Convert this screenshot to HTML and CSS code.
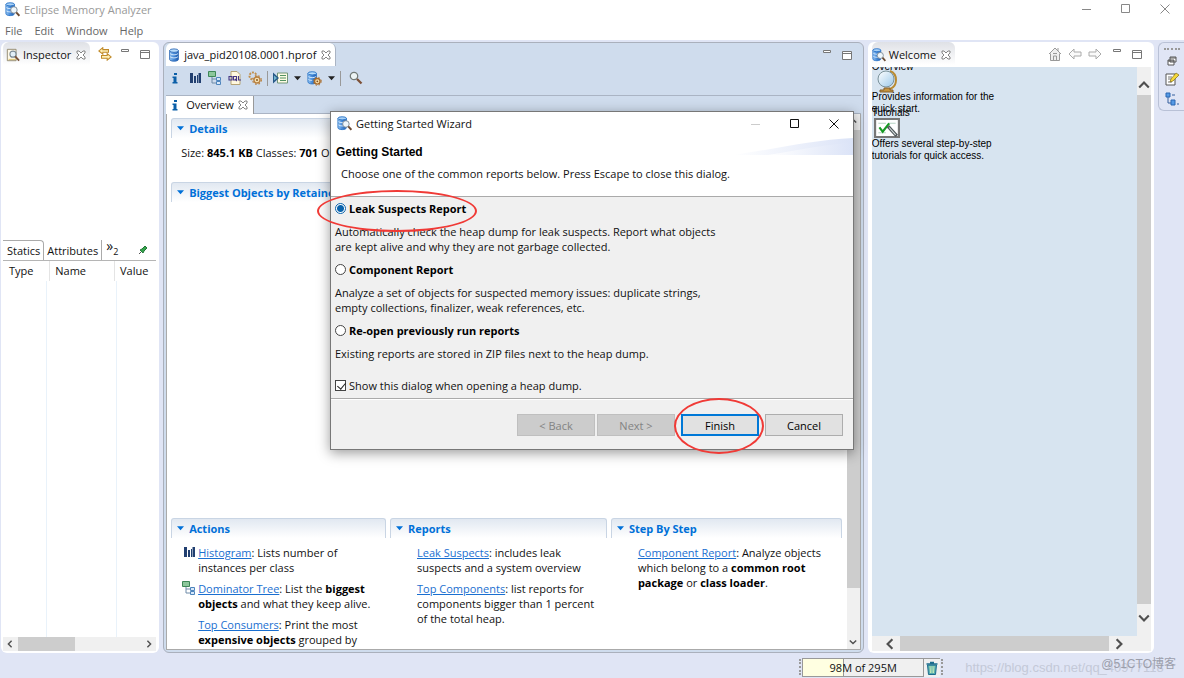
FILE: index.html
```html
<!DOCTYPE html>
<html lang="en">
<head>
<meta charset="utf-8">
<title>Eclipse Memory Analyzer</title>
<link rel="stylesheet" href="styles.css">
</head>
<body>
<svg class="defs" aria-hidden="true">
  <defs>
    <linearGradient id="blue" x1="0" x2="1"><stop offset="0" stop-color="#9cc8f2"/><stop offset=".4" stop-color="#4f92dd"/><stop offset="1" stop-color="#1f5cae"/></linearGradient>
    <linearGradient id="globe" x1="0" y1="0" x2="1" y2="1"><stop offset="0" stop-color="#fff"/><stop offset="1" stop-color="#9cc9ea"/></linearGradient>
    <linearGradient id="swoosh" x1="0" x2="1"><stop offset="0" stop-color="#fff"/><stop offset="1" stop-color="#dbe3f7"/></linearGradient>
    <symbol id="db" viewBox="0 0 16 16"><path d="M3 3v10c0 1.300 2 2 5 2s5-.7 5-2V3z" fill="url(#blue)" stroke="#2b67b5"/><ellipse cx="8" cy="3" rx="5" ry="2" fill="#b9dcfa" stroke="#2b67b5"/><path d="M3.500 6.500c2 1.800 7 1.800 9 0M3.500 10c2 1.800 7 1.800 9 0" fill="none" stroke="#e4f2ff"/></symbol>
    <symbol id="mat" viewBox="0 0 16 16"><path d="M1 2.500v10c0 1.200 2 2 4.500 2s4.500-.8 4.500-2v-10z" fill="url(#blue)" stroke="#2b74c8"/><ellipse cx="5.500" cy="2.500" rx="4.500" ry="1.700" fill="#a9d2f7" stroke="#2b74c8"/><path d="M1.500 6c2 1.500 6 1.500 8 0M1.500 9.500c2 1.500 6 1.500 8 0" fill="none" stroke="#d8ecff"/><circle cx="9.500" cy="8.500" r="3.500" fill="#eef6fb" stroke="#7b8a96"/><path d="M12 11l3.300 3.700" stroke="#6b4a32" stroke-width="2"/></symbol>
    <symbol id="inspect" viewBox="0 0 16 16"><path d="M1.500 1.500h10v13h-10z" fill="#fff9e8" stroke="#8c8468"/><path d="M3 13h8" stroke="#d6b95c"/><circle cx="8" cy="7" r="3.500" fill="#e2eff8" stroke="#7c8c98" stroke-width="1.300"/><path d="M10.500 9.500l4.500 5" stroke="#7a5138" stroke-width="2"/></symbol>
    <symbol id="close" viewBox="0 0 10 10"><path d="M1 1h2l2 2 2-2h2v2L7 5l2 2v2H7L5 7 3 9H1V7l2-2-2-2z" fill="#fff" stroke="#777" stroke-width=".9"/></symbol>
    <symbol id="sync" viewBox="0 0 16 16"><path d="M5.500 .8L1 4.500l4.500 3.700V6H12V3H5.500zM10.500 7.500v2.300H4v3h6.500V15L15 11.300z" fill="#fff0b8" stroke="#c08a28" stroke-width="1.200"/></symbol>
    <symbol id="info" viewBox="0 0 14 14"><path d="M6 2h3v2H6zM4.500 5.500h4V11h1v1.500h-5V11h1V7h-1z" fill="#0b5fa8"/></symbol>
    <symbol id="hist" viewBox="0 0 14 14"><path d="M2 2h3v10H2zM6 5h2v7H6zM9 4h1v8H9zM10.500 2H13v10h-2.500z" fill="#213f70"/></symbol>
    <symbol id="tree" viewBox="0 0 14 14"><path d="M4 6v6h4M4 8h4" fill="none" stroke="#6e8ba8"/><path d="M.5.500h7v5h-7z" fill="#8cc79b" stroke="#3e8758"/><path d="M8.500 6.500h4v3h-4zM8.500 10.500h4v3h-4z" fill="#d7e8fa" stroke="#4e85bd"/></symbol>
    <symbol id="oql" viewBox="0 0 14 14"><path d="M3 .5h6l3 3v10H3z" fill="#fff8df" stroke="#b5a376"/><path d="M1 5.500h3v3.500H1zM5.500 5.500h3v3.500h-3zM10.500 5v4H13M7 8l2 2" fill="none" stroke="#453783" stroke-width="1.100"/></symbol>
    <symbol id="gear" viewBox="0 0 14 14"><circle cx="5" cy="5" r="3.500" fill="none" stroke="#c08f4e" stroke-width="2" stroke-dasharray="2 1"/><circle cx="9" cy="9" r="3" fill="#f4e1b6" stroke="#b9803e" stroke-width="1.300"/><circle cx="9" cy="9" r="4.300" fill="none" stroke="#b9803e" stroke-width="1.300" stroke-dasharray="1.500 2"/><circle cx="9" cy="9" r="1" fill="#8b5a22"/></symbol>
    <symbol id="run" viewBox="0 0 15 14"><path d="M4.500 1.500h10v10h-10z" fill="#fffbe5" stroke="#729679"/><path d="M7 4h6M7 6.500h6M7 9h6" stroke="#529362"/><path d="M0 1l6 5.500L0 12z" fill="#285987"/><path d="M1 4v5l3-2.500z" fill="#71b6cf"/></symbol>
    <symbol id="dbgear" viewBox="0 0 16 16"><path d="M1 2.500v9c0 3 9 3 9 0v-9z" fill="url(#blue)" stroke="#2b74c8"/><ellipse cx="5.500" cy="2.500" rx="4.500" ry="1.700" fill="#b7dcfa" stroke="#2b74c8"/><path d="M1.500 6c2 1.500 6 1.500 8 0M1.500 9c1 1 3 1 4 1" fill="none" stroke="#d8ecff"/><circle cx="11" cy="11" r="3" fill="#f8dfaa" stroke="#a96c2b" stroke-width="1.500"/><circle cx="11" cy="11" r="4.300" fill="none" stroke="#a96c2b" stroke-dasharray="1.500 2"/><circle cx="11" cy="11" r="1" fill="#805025"/></symbol>
    <symbol id="search" viewBox="0 0 14 14"><circle cx="5" cy="5" r="3.700" fill="#edf4f4" stroke="#737b77" stroke-width="1.300"/><path d="M8 8l4.500 4.500" stroke="#7d5137" stroke-width="2.300"/></symbol>
    <symbol id="down" viewBox="0 0 8 5"><path d="M0 0h8L4 4.500z" fill="currentColor"/></symbol>
    <symbol id="min" viewBox="0 0 10 10"><path d="M1.500 3.500h7v2h-7z" fill="#fff" stroke="#777"/></symbol>
    <symbol id="max" viewBox="0 0 10 10"><path d="M.5 1.500h9v8h-9zM.5 3.500h9" fill="#fff" stroke="#777"/></symbol>
    <symbol id="pin" viewBox="0 0 10 10"><path d="M1 9l3-3" stroke="#555"/><path d="M2 5l2-1 3-3 2 2-3 3-1 2z" fill="#36a34b" stroke="#217838"/></symbol>
    <symbol id="home" viewBox="0 0 14 14"><path d="M1 7l6-6 6 6M2.500 6.500v7h9v-7" fill="#eee" stroke="#999"/><path d="M5.500 13V9h3v4M5 6.500h4M10 1v3" fill="none" stroke="#999"/></symbol>
    <symbol id="back" viewBox="0 0 14 12"><path d="M6 1L1 6l5 5V8h7V4H6z" fill="#fafafa" stroke="#aaa"/></symbol>
    <symbol id="restore" viewBox="0 0 10 10"><path d="M3 1h6v5H3zM1 4h6v5H1zM3 2h6M1 5h6" fill="#fff" stroke="#555"/></symbol>
    <symbol id="note" viewBox="0 0 14 14"><path d="M1 2h9v11H1z" fill="#fff" stroke="#555"/><path d="M3 5h4M3 7h3M3 10h4" stroke="#777"/><path d="M5 10l1-3 5-6 3 2-6 6z" fill="#f5d83a" stroke="#806b16" stroke-width=".7"/></symbol>
    <symbol id="outline" viewBox="0 0 14 14"><path d="M3 5v6h3M7 3h3M11 7h0M12 12h2" fill="none" stroke="#345f9d"/><path d="M1 1h4v4H1zM6 8h4v5H6z" fill="#5499e5" stroke="#2a67b2"/></symbol>
    <symbol id="trash" viewBox="0 0 12 14"><path d="M1.500 4h9l-1 9.500h-7z" fill="#55acae" stroke="#1d6d8d"/><path d="M4 5l.5 7M6 5v7M8 5l-.5 7" stroke="#c7edb7"/><path d="M.5 3h11M4 1.500h4" stroke="#1d6d8d" stroke-width="1.500"/></symbol>
    <symbol id="chev" viewBox="0 0 10 10"><path d="M1 3l4 4 4-4" fill="none" stroke="#505050" stroke-width="1.800"/></symbol>
    <symbol id="wmin" viewBox="0 0 10 10"><path d="M0 5.500h9" stroke="currentColor"/></symbol>
    <symbol id="wmax" viewBox="0 0 10 10"><path d="M.5.500h8v8h-8z" fill="none" stroke="currentColor"/></symbol>
    <symbol id="wclose" viewBox="0 0 10 10"><path d="M.5.500l9 9M9.500.500l-9 9" stroke="currentColor"/></symbol>
  </defs>
</svg>
<div class="app">
  <header class="titlebar">
    <svg class="i15"><use href="#mat"/></svg><h1>Eclipse Memory Analyzer</h1>
    <div class="winbtns">
      <button aria-label="Minimize"><svg class="i10"><use href="#wmin"/></svg></button>
      <button aria-label="Maximize"><svg class="i10"><use href="#wmax"/></svg></button>
      <button aria-label="Close"><svg class="i10"><use href="#wclose"/></svg></button>
    </div>
  </header>
  <nav class="menubar"><button>File</button><button>Edit</button><button>Window</button><button>Help</button></nav>

  <main class="workbench">
    <section class="pane inspector">
      <div class="tabrow">
        <div class="tab graytab"><svg class="i14"><use href="#inspect"/></svg><span>Inspector</span><svg class="i10"><use href="#close"/></svg></div>
        <svg class="i14"><use href="#sync"/></svg>
        <svg class="i10 raised"><use href="#min"/></svg>
        <svg class="i10 wide"><use href="#max"/></svg>
      </div>
      <div class="inspect-body"></div>
      <div class="subtabs"><button class="on">Statics</button><button>Attributes</button><span class="more">»<sub>2</sub></span><svg class="i10"><use href="#pin"/></svg></div>
      <table class="props"><thead><tr><th>Type</th><th>Name</th><th>Value</th></tr></thead><tbody><tr><td></td><td></td><td></td></tr></tbody></table>
      <div class="hbar small"><svg class="i8 left"><use href="#chev"/></svg><div class="track"><div class="thumb third"></div></div><svg class="i8 right"><use href="#chev"/></svg></div>
    </section>

    <section class="pane editor">
      <div class="tabrow">
        <div class="tab filetab"><svg class="i14"><use href="#db"/></svg><span>java_pid20108.0001.hprof</span><svg class="i10"><use href="#close"/></svg></div>
        <div class="ends"><svg class="i10 raised"><use href="#min"/></svg><svg class="i10"><use href="#max"/></svg></div>
      </div>
      <div class="toolbar">
        <button aria-label="Overview"><svg class="i14"><use href="#info"/></svg></button>
        <button aria-label="Histogram"><svg class="i14"><use href="#hist"/></svg></button>
        <button aria-label="Dominator tree"><svg class="i14"><use href="#tree"/></svg></button>
        <button aria-label="OQL"><svg class="i14"><use href="#oql"/></svg></button>
        <button aria-label="Threads"><svg class="i14"><use href="#gear"/></svg></button>
        <i class="sep"></i>
        <button aria-label="Run report"><svg class="i15"><use href="#run"/></svg></button>
        <button aria-label="Report list"><svg class="arrow"><use href="#down"/></svg></button>
        <button aria-label="Query browser"><svg class="i15"><use href="#dbgear"/></svg></button>
        <button aria-label="Query list"><svg class="arrow"><use href="#down"/></svg></button>
        <i class="sep"></i>
        <button class="find" aria-label="Search"><svg class="i14"><use href="#search"/></svg></button>
      </div>
      <div class="innertabs"><div class="overtab"><svg class="i14"><use href="#info"/></svg><span>Overview</span><svg class="i10"><use href="#close"/></svg></div></div>
      <div class="editbody">
        <div class="overview">
          <section class="details"><h2><svg class="arrow"><use href="#down"/></svg>Details</h2>
            <p>Size: <b>845.1 KB</b> Classes: <b>701</b> Ob</p></section>
          <section class="biggest"><h2><svg class="arrow"><use href="#down"/></svg>Biggest Objects by Retained Size</h2>
            <p class="total">Total: 845.1 KB</p></section>
          <div class="columns">
            <section><h2><svg class="arrow"><use href="#down"/></svg>Actions</h2>
              <ul class="acts">
                <li><svg class="i14"><use href="#hist"/></svg><p><a href="#">Histogram</a>: Lists number of<br>instances per class</p></li>
                <li><svg class="i14"><use href="#tree"/></svg><p><a href="#">Dominator Tree</a>: List the <b>biggest<br>objects</b> and what they keep alive.</p></li>
                <li><p><a href="#">Top Consumers</a>: Print the most<br><b>expensive objects</b> grouped by</p></li>
              </ul></section>
            <section><h2><svg class="arrow"><use href="#down"/></svg>Reports</h2>
              <ul><li><p><a href="#">Leak Suspects</a>: includes leak<br>suspects and a system overview</p></li>
                <li><p><a href="#">Top Components</a>: list reports for<br>components bigger than 1 percent<br>of the total heap.</p></li></ul></section>
            <section><h2><svg class="arrow"><use href="#down"/></svg>Step By Step</h2>
              <ul><li><p><a href="#">Component Report</a>: Analyze objects<br>which belong to a <b>common root<br>package</b> or <b>class loader</b>.</p></li></ul></section>
          </div>
        </div>
        <div class="vbar thin"><svg class="i8 up"><use href="#chev"/></svg><div class="track"><div class="thumb"></div></div><svg class="i8"><use href="#chev"/></svg></div>
      </div>
    </section>

    <section class="pane welcome">
      <div class="tabrow">
        <div class="tab graytab"><svg class="i14"><use href="#mat"/></svg><span>Welcome</span><svg class="i10"><use href="#close"/></svg></div>
        <div class="ends"><svg class="i14"><use href="#home"/></svg><svg class="i14"><use href="#back"/></svg><svg class="i14 flip"><use href="#back"/></svg><svg class="i10 raised"><use href="#min"/></svg><svg class="i10"><use href="#max"/></svg></div>
      </div>
      <div class="welbody">
        <div class="weltext">
          <h3 class="cut">Overview</h3>
          <svg class="pic globe" viewBox="0 0 24 24"><path d="M15 2c8 3 8 15 0 18" fill="none" stroke="#b98b32" stroke-width="2"/><circle cx="11" cy="10" r="8" fill="url(#globe)" stroke="#7b929b"/><path d="M9 19h6v2h3v2H5v-2h4z" fill="#c4943f" stroke="#85612c"/></svg>
          <p>Provides information for the<br>quick start.</p>
          <h3 class="lap">Tutorials</h3>
          <svg class="pic board" viewBox="0 0 24 19" preserveAspectRatio="none"><path d="M1 1h22v17H1z" fill="#fff" stroke="#777" stroke-width="2"/><path d="M4 5h7M13 5h7M4 14h7" stroke="#b7d3c4"/><path d="M5 9l3 4 6-8" fill="none" stroke="#179a24" stroke-width="2"/><path d="M13 8l8 9" stroke="#4f5759" stroke-width="3"/><path d="M14 9l6 7" stroke="#d8dfdf"/></svg>
          <p>Offers several step-by-step<br>tutorials for quick access.</p>
        </div>
        <div class="vbar"><svg class="i12 up"><use href="#chev"/></svg><div class="track"><div class="thumb"></div></div><svg class="i12"><use href="#chev"/></svg></div>
        <div class="hbar"><svg class="i12 left"><use href="#chev"/></svg><div class="track"><div class="thumb"></div></div><svg class="i12 right"><use href="#chev"/></svg></div>
      </div>
    </section>

    <aside class="trim"><i class="grip"></i><svg class="i10"><use href="#restore"/></svg><svg class="i14"><use href="#note"/></svg><svg class="i14"><use href="#outline"/></svg></aside>
  </main>

  <footer class="status">
    <i class="vgrip"></i><div class="heap">98M of 295M</div><button class="gc" aria-label="Run garbage collector"><svg class="i14"><use href="#trash"/></svg></button><i class="vgrip"></i>
    <span class="mark">https://blog.csdn.net/qq_40977118</span><span class="mark site">@51CTO博客</span>
  </footer>
</div>

<form class="dialog" role="dialog" aria-labelledby="dlgtitle">
  <div class="dlgbar"><svg class="i15"><use href="#mat"/></svg><span id="dlgtitle">Getting Started Wizard</span>
    <div class="winbtns"><button type="button" class="off" aria-label="Minimize dialog"><svg class="i10"><use href="#wmin"/></svg></button><button type="button" aria-label="Maximize dialog"><svg class="i10"><use href="#wmax"/></svg></button><button type="button" aria-label="Close dialog"><svg class="i10"><use href="#wclose"/></svg></button></div></div>
  <div class="dlghead">
    <svg class="swoosh" viewBox="0 0 120 18" preserveAspectRatio="none"><path d="M0 18C40 12 80 2 120 0v18z" fill="url(#swoosh)"/><path d="M35 18C70 12 90 7 120 5v13z" fill="url(#swoosh)"/></svg>
    <h2>Getting Started</h2><p>Choose one of the common reports below. Press Escape to close this dialog.</p>
  </div>
  <div class="dlgbody">
    <label><input type="radio" name="report" checked><b>Leak Suspects Report</b></label>
    <p>Automatically check the heap dump for leak suspects. Report what objects<br>are kept alive and why they are not garbage collected.</p>
    <label><input type="radio" name="report"><b>Component Report</b></label>
    <p>Analyze a set of objects for suspected memory issues: duplicate strings,<br>empty collections, finalizer, weak references, etc.</p>
    <label><input type="radio" name="report"><b>Re-open previously run reports</b></label>
    <p>Existing reports are stored in ZIP files next to the heap dump.</p>
    <label class="show"><input type="checkbox" checked><span>Show this dialog when opening a heap dump.</span></label>
  </div>
  <div class="dlgfoot"><button type="button" disabled>&lt; Back</button><button type="button" disabled>Next &gt;</button><button type="button" class="primary">Finish</button><button type="button">Cancel</button></div>
  <i class="ring ring-report"></i><i class="ring ring-finish"></i>
</form>
</body>
</html>
```

FILE: styles.css
```css
* { box-sizing: border-box; }
html, body { height: 100%; }
body { margin: 0; overflow: hidden; font: 11px/15px "Open Sans", "Noto Sans", "Noto Sans CJK SC", sans-serif; color: #111; background: #e0e5f5; }
h1, h2, h3, p, ul { margin: 0; padding: 0; font-size: inherit; }
ul { list-style: none; }
button { font: inherit; color: inherit; border: 0; background: none; padding: 0; }
svg { display: block; flex: none; }
.defs { position: absolute; width: 0; height: 0; }
.i8 { width: 8px; height: 8px; }
.i10 { width: 10px; height: 10px; }
.i12 { width: 12px; height: 12px; }
.i14 { width: 14px; height: 14px; }
.i15 { width: 15px; height: 15px; }
.up { transform: rotate(180deg); }
.left { transform: rotate(90deg); }
.right { transform: rotate(-90deg); }
.flip { transform: rotate(180deg); }
.arrow { width: 7px; height: 5px; }

.app { height: 100%; display: flex; flex-direction: column; }
.titlebar { height: 20px; flex: none; display: flex; align-items: center; gap: 4px; padding: 0 0 2px 5px; background: #fff; color: #999; }
.titlebar h1 { font-weight: 400; font-size: 11px; }
.winbtns { margin-left: auto; display: flex; }
.winbtns button { width: 39px; display: flex; justify-content: center; color: #888; }
.menubar { height: 20px; flex: none; display: flex; gap: 12px; padding: 0 5px; background: #fff; color: #666; align-items: center; }

.workbench { flex: 1; min-height: 0; display: grid; grid-template-columns: 158fr 700fr 286fr 26px; gap: 4px; padding: 2px 0 0 1px; }
.pane { min-width: 0; min-height: 0; overflow: hidden; display: flex; flex-direction: column; background: #fff; border-radius: 6px; }
.tabrow { height: 23px; flex: none; display: flex; align-items: center; gap: 8px; }
.tab { height: 23px; display: flex; align-items: center; gap: 3px; padding: 2px 6px 0; border-radius: 6px 6px 0 0; white-space: nowrap; }
.tab .i10 { margin-left: 2px; }
.graytab { background: linear-gradient(#dfe1e6, #fff); padding: 2px 4px 0; }
.ends { margin-left: auto; display: flex; align-items: center; gap: 9px; padding-right: 11px; }
.inspector .tabrow { gap: 8px; }
.raised { margin-bottom: 5px; }
.wide { margin-left: 2px; }

.inspector { padding: 0 3px 2px 2px; }
.inspector .graytab { padding-left: 3px; }
.inspect-body { flex: 175 0 0; }
.subtabs { height: 21px; flex: none; display: flex; align-items: stretch; border-bottom: 1px solid #b5b5b5; }
.subtabs button { padding: 0 3px; border-right: 1px solid #aaa; }
.subtabs .on { padding-left: 4px; border-top: 1px solid #aaa; border-radius: 0 4px 0 0; background: #fff; }
.subtabs .i10 { margin: 5px 8px 0 auto; }
.more { padding-left: 4px; font-size: 14px; line-height: 12px; }
.more sub { font-size: 9px; }
.props { flex: 376 0 0; display: flex; flex-direction: column; border-collapse: collapse; }
.props thead, .props tbody { display: block; }
.props tbody { flex: 1; display: flex; }
.props tr { display: flex; width: 100%; }
.props th { font-weight: 400; text-align: left; padding: 2px 6px; height: 20px; border-right: 1px solid #e4e4e4; }
.props td { border-right: 1px solid #e9f2fa; padding: 0; }
.props th:nth-child(1), .props td:nth-child(1) { flex: 44 0 0; }
.props th:nth-child(2), .props td:nth-child(2) { flex: 69 0 0; }
.props th:nth-child(3), .props td:nth-child(3) { flex: 40 0 0; border: 0; }
.props tr > th:nth-child(n+2) { padding: 2px 5px; }
.hbar { display: flex; align-items: center; background: #f0f0f0; height: 14px; padding: 0 3px; }
.hbar .track { flex: 1; height: 100%; padding: 0 4px; }
.thumb { background: #cdcdcd; height: 100%; }
.third { width: 46%; }
.small { flex: none; }

.editor { background: #cfdced; border: 1px solid #aab0bc; padding: 0 2px 2px; }
.filetab { background: #fff; border-right: 1px solid #aab4c4; padding: 0 4px 0 1px; }
.editor .ends { gap: 10px; padding-right: 9px; }
.toolbar { height: 29px; flex: none; display: flex; align-items: center; gap: 6px; padding: 0 3px 5px 2px; }
.toolbar button { display: flex; color: #222; }
.toolbar .sep { width: 1px; height: 15px; background: #999; margin: 0 -1px; }
.toolbar .find { margin-left: 3px; }
.innertabs { height: 19px; flex: none; border-top: 1px solid #aab4c4; border-bottom: 1px solid #aab4c4; display: flex; }
.overtab { height: 18px; display: flex; align-items: center; gap: 4px; background: #fff; border-right: 1px solid #999; padding: 0 5px 1px 2px; }
.editbody { flex: 1; min-height: 0; display: flex; background: #fff; border: 1px solid #aaa; border-top: 0; }
.overview { flex: 1; min-width: 0; min-height: 0; overflow: hidden; display: flex; flex-direction: column; padding: 4px 5px 0 4px; }
.overview h2 { height: 20px; display: flex; align-items: center; gap: 5px; padding: 0 5px; color: #0070d8; border: 1px solid #c9d5e4; border-bottom: 0; border-radius: 3px 3px 0 0; background: linear-gradient(#e1e8f1, #fff); white-space: nowrap; }
.details { height: 64px; flex: none; }
.details p { padding: 7px 10px; }
.biggest { flex: 337 0 0; display: flex; flex-direction: column; }
.total { margin: auto 0 65px; text-align: center; font: bold 10px/12px "Liberation Mono", monospace; color: #000; }
.columns { flex: 131 0 0; min-height: 0; display: grid; grid-template-columns: 215fr 217fr 231fr; gap: 4px; }
.columns section { min-width: 0; }
.columns ul { padding: 7px 0 0 27px; }
.columns .acts { padding-left: 11px; }
.columns li { display: flex; gap: 2px; margin-bottom: 6px; white-space: nowrap; }
.acts li > p:first-child { padding-left: 16px; }
a { color: #1a6fd0; }
b { font-weight: 700; color: #000; }
.vbar { display: flex; flex-direction: column; align-items: center; background: #f0f0f0; width: 13px; padding: 3px 0; }
.vbar .track { flex: 1; width: 100%; padding: 5px 0; }
.thin .thumb { height: 91%; }

.welcome { padding: 0 3px 2px 4px; }
.welcome .graytab { padding-left: 0; }
.welcome .ends { gap: 6px; padding-right: 9px; }
.welcome .ends .i10 { margin-left: 4px; }
.welbody { flex: 1; min-height: 0; margin-top: 2px; display: grid; grid-template-columns: 1fr 14px; grid-template-rows: 1fr 15px; background: #f0f0f0; }
.weltext { background: #d7e4f0; overflow: hidden; font: 10px/12px "Liberation Sans", Arial, sans-serif; color: #000; }
.weltext h3 { font-weight: 400; }
.cut { margin-top: -6px; }
.pic { width: 26px; margin-left: 2px; }
.globe { height: 24px; margin-top: -4px; margin-bottom: -2px; }
.lap { margin-top: -8px; }
.board { height: 20px; margin-top: -1px; }
.welbody .vbar { width: 14px; padding: 12px 0; }
.welbody .vbar .track { padding: 4px 0 8px; }
.welbody .hbar { height: 15px; padding: 0 12px; }
.trim { height: 69px; padding: 5px 6px; display: flex; flex-direction: column; align-items: center; gap: 6px; border: 1px solid #b9c1d6; border-right: 0; border-radius: 6px 0 0 6px; }
.grip { width: 16px; border-top: 2px dotted #999; flex: none; }

.status { height: 25px; flex: none; display: flex; align-items: center; padding: 3px 8px 0 67.5%; white-space: nowrap; }
.vgrip { height: 16px; border-left: 2px dotted #999; }
.heap { width: 122px; height: 19px; margin-left: 1px; text-align: center; border: 1px solid #999; line-height: 17px; background: linear-gradient(90deg, #ffffe1 33%, #999 33%, #999 34%, #f0f0f0 34%); }
.gc { height: 19px; padding: 2px 1px; background: #f0f0f0; border-top: 1px solid #999; margin-right: 1px; }
.mark { margin-left: 22px; font: 13px/15px "Liberation Sans", "Noto Sans CJK SC", sans-serif; color: #c4c9d8; }
.mark.site { position: absolute; right: 8px; bottom: 6px; font-size: 12px; color: #9b9eab; }

.dialog { position: absolute; left: 330px; top: 111px; width: 524px; border: 1px solid #777; background: #f0f0f0; box-shadow: 0 3px 12px rgba(0,0,0,.4); }
.dlgbar { height: 26px; background: #fff; display: flex; align-items: center; gap: 4px; padding: 0 0 3px 6px; }
.dlgbar .winbtns button { color: #111; }
.dlgbar .winbtns .off { color: #ccc; }
.dlghead { position: relative; height: 59px; background: #fff; border-bottom: 1px solid #aaa; padding: 7px 5px; }
.dlghead h2 { color: #000; font: bold 12px/15px "Liberation Sans", Arial, sans-serif; }
.dlghead p { padding: 6px 5px; }
.swoosh { position: absolute; right: 0; top: 0; width: 120px; height: 17px; }
.dlgbody { padding: 4px 4px 5px; border-bottom: 1px solid #aaa; }
.dlgbody label { display: flex; align-items: center; gap: 3px; height: 15px; }
.dlgbody p { padding: 8px 0; }
.dlgbody input { width: 11px; height: 11px; margin: 0; appearance: none; border: 1px solid #444; background: #fff; }
.dlgbody input[type=radio] { border-radius: 50%; }
.dlgbody input[type=radio]:checked { border-color: #0a64ad; background: radial-gradient(circle, #0a64ad 3px, #fff 4px); }
.dlgbody input[type=checkbox]:checked::before { content: ""; display: block; width: 4px; height: 7px; margin: 0 0 0 3px; border: solid #222; border-width: 0 1px 1px 0; transform: rotate(40deg); }
.dlgbody .show { margin-top: 9px; }
.dlgfoot { display: flex; justify-content: flex-end; gap: 2px; padding: 14px 10px 13px; border-top: 1px solid #fff; }
.dlgfoot button { width: 78px; height: 22px; background: #e1e1e1; border: 1px solid #adadad; color: #000; }
.dlgfoot button:disabled { background: #ccc; border-color: #bfbfbf; color: #838383; }
.dlgfoot .primary { border: 2px solid #0078d7; margin: 0 4px; }
.ring { position: absolute; border: 2px solid #f03a36; border-radius: 50%; pointer-events: none; }
.ring-report { left: -14px; top: 78px; width: 160px; height: 42px; }
.ring-finish { left: 343px; top: 286px; width: 90px; height: 56px; }
```
